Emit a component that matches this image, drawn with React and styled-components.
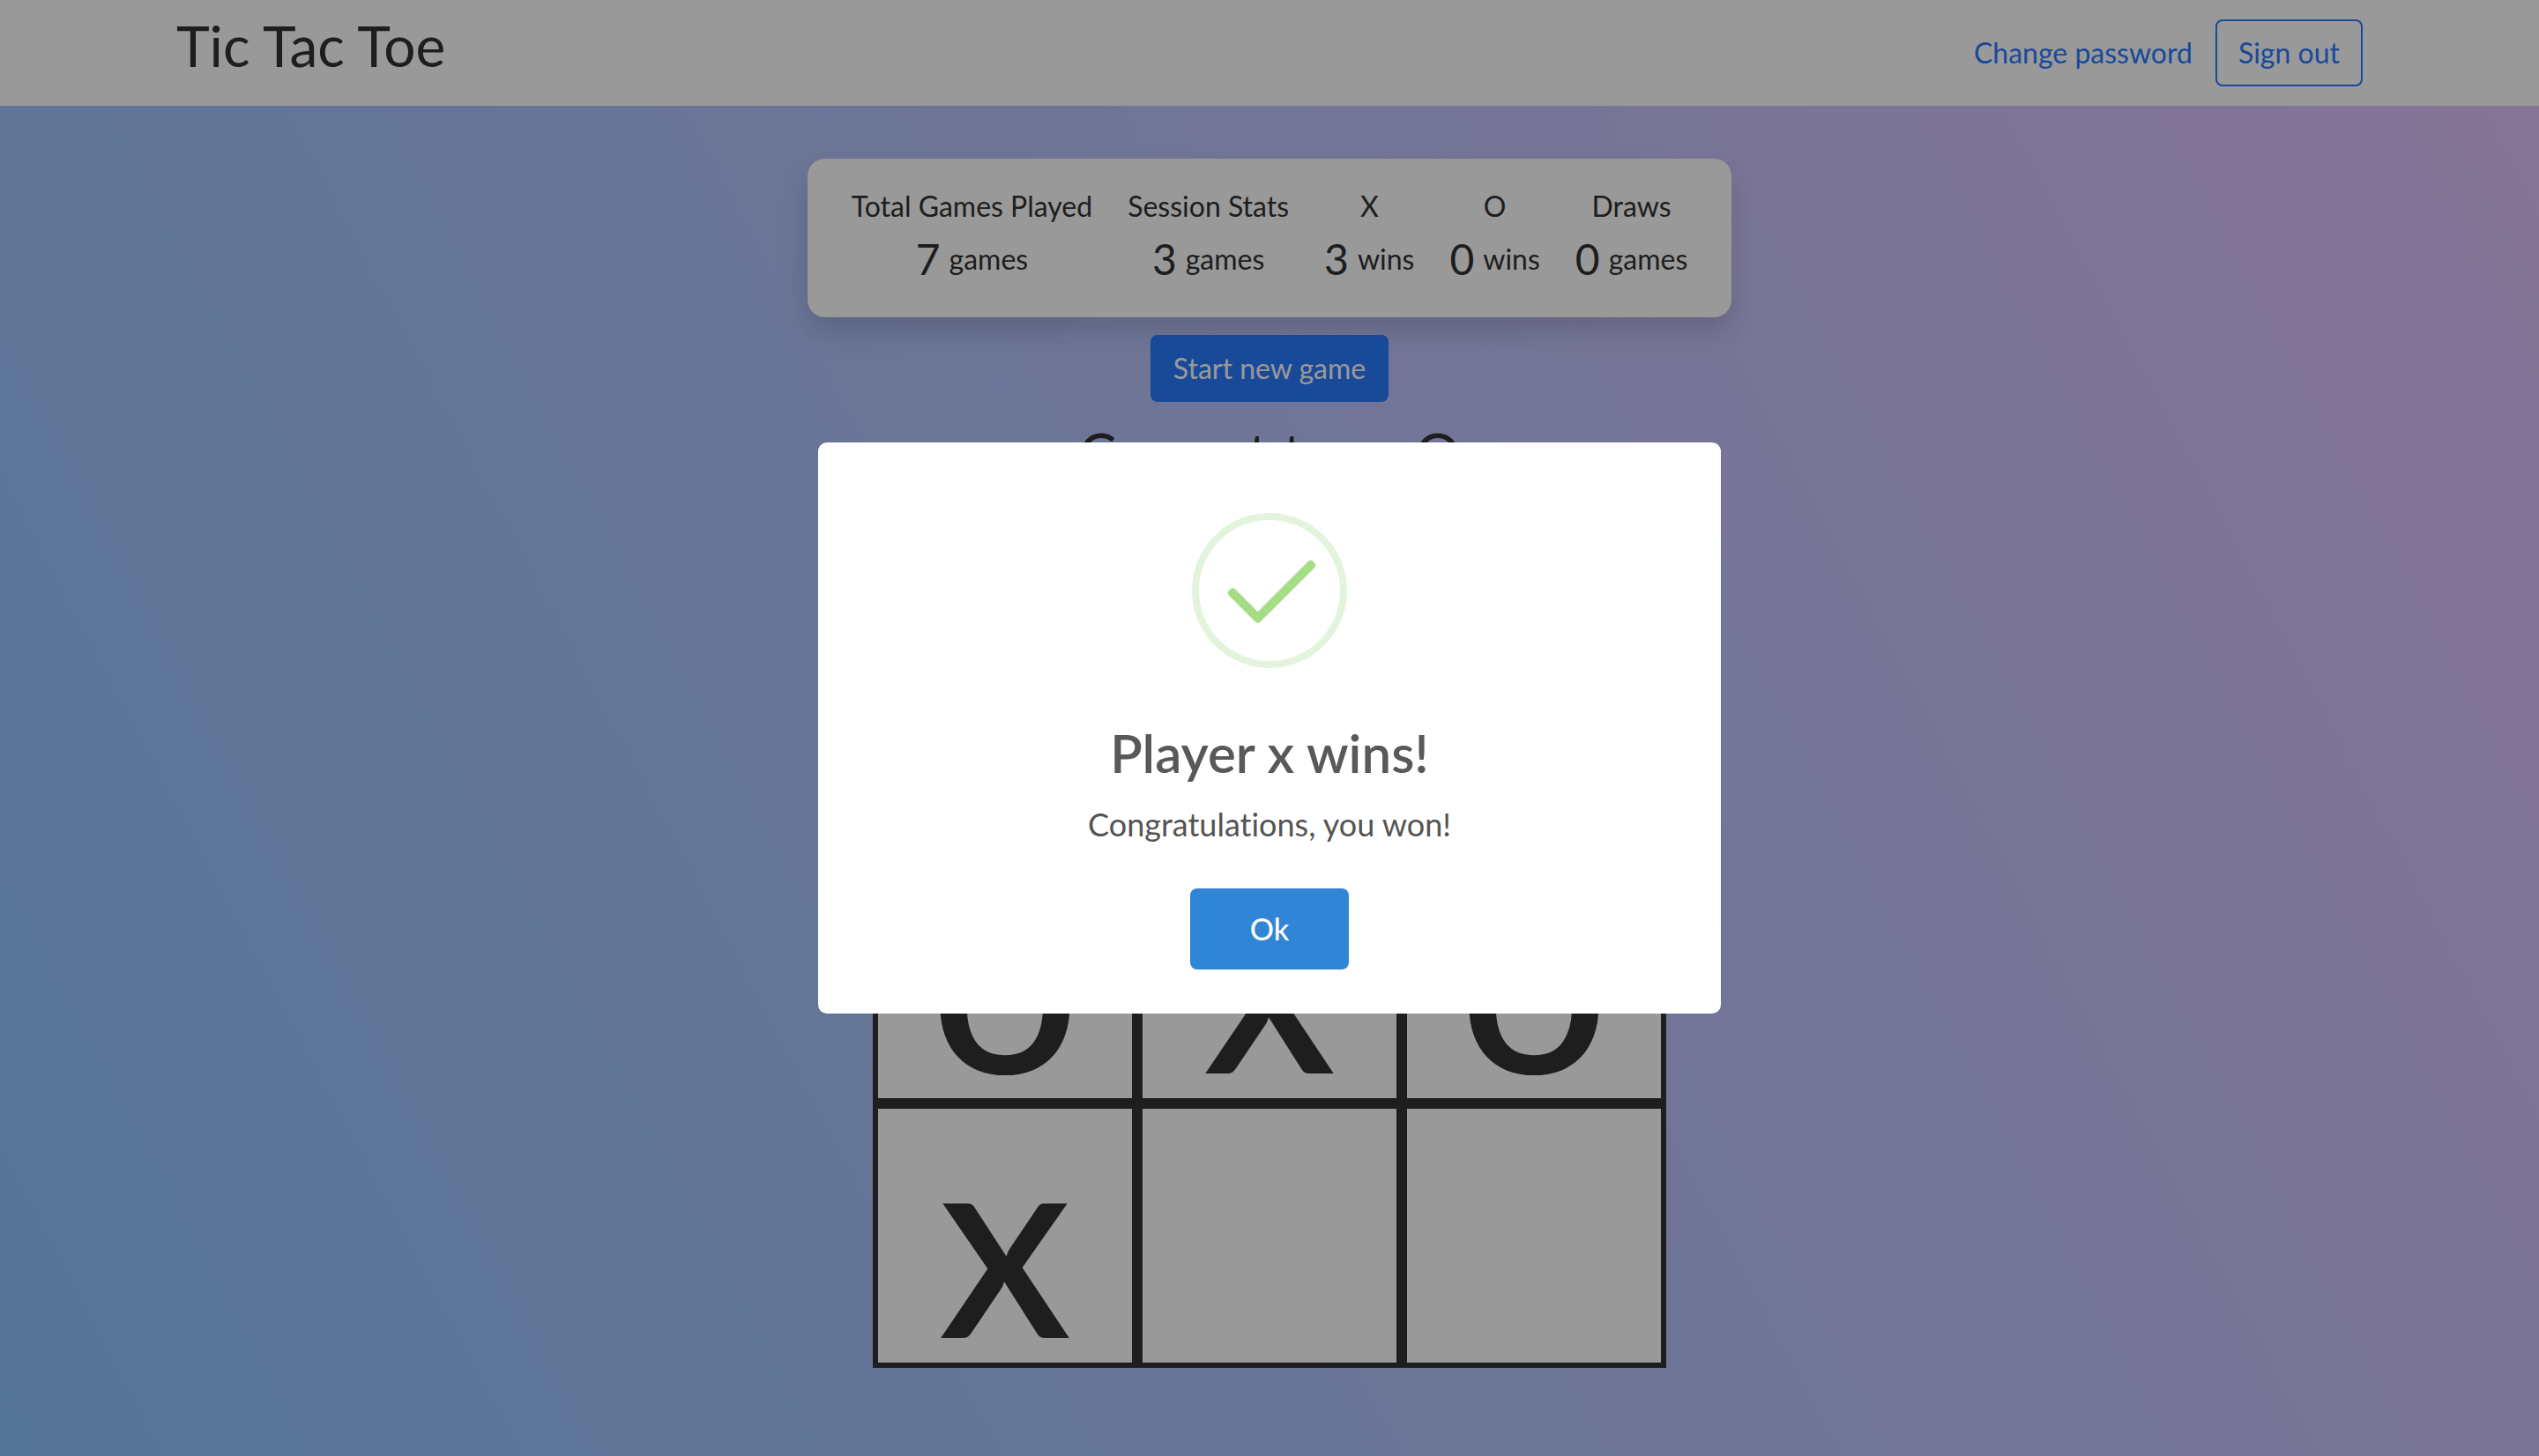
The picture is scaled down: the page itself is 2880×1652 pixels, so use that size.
import React from "react";
import styled, { createGlobalStyle } from "styled-components";

const GlobalStyle = createGlobalStyle`
  *, *::before, *::after { box-sizing: border-box; }
  body {
    margin: 0;
    color: #333333;
    font-family: Lato, "Noto Sans", sans-serif;
    font-size: 32px;
    font-variant-ligatures: none;
    line-height: 48px;
  }
  button { font: inherit; cursor: pointer; }
  h1, h2, p, dl, dt, dd { margin: 0; }
`;

const Page = styled.div`
  display: flex;
  flex-direction: column;
  min-height: 100vh;
  background: linear-gradient(62deg, #8ec5fc 0%, #e0c3fc 100%);
`;

const Navbar = styled.header`
  background: #ffffff;
`;

const NavContainer = styled.div`
  display: flex;
  align-items: center;
  justify-content: space-between;
  width: 100%;
  max-width: 2480px;
  min-height: 120px;
  margin: 0 auto;
`;

const Heading = styled.h1`
  margin-bottom: 16px;
  font-size: 64px;
  font-weight: 400;
  line-height: 76px;
`;

const Nav = styled.nav`
  display: flex;
  align-items: center;
`;

const NavLink = styled.a`
  padding: 12px 26px;
  color: #2a7bff;
  text-decoration: none;
`;

const Button = styled.button`
  padding: 12px 24px;
  border: 2px solid #2a7bff;
  border-radius: 8px;
  background: ${(p) => (p.$outline ? "transparent" : "#2a7bff")};
  color: ${(p) => (p.$outline ? "#2a7bff" : "#ffffff")};
`;

const Main = styled.main`
  display: flex;
  flex-direction: column;
  align-items: center;
  gap: 20px;
  padding: 60px 0 100px;
`;

const StatsCard = styled.dl`
  display: flex;
  gap: 40px;
  padding: 30px 50px;
  border-radius: 20px;
  background: #ffffff;
  box-shadow: 0 16px 32px rgba(0, 0, 0, 0.15);
`;

const Stat = styled.div`
  display: flex;
  flex-direction: column;
  align-items: center;
`;

const StatValue = styled.dd`
  display: flex;
  align-items: center;
  gap: 10px;
`;

const StatNumber = styled.span`
  font-size: 48px;
  line-height: 72px;
`;

const Game = styled.section`
  display: flex;
  flex-direction: column;
  align-items: center;
  gap: 100px;
`;

const TurnHeading = styled.h2`
  font-size: 64px;
  font-weight: 400;
  line-height: 76px;
`;

const Board = styled.div`
  display: grid;
  grid-template-columns: repeat(3, 300px);
  grid-auto-rows: 300px;
`;

const Cell = styled.button`
  display: flex;
  align-items: center;
  justify-content: center;
  padding: 0;
  border: 6px solid #333333;
  background: #ffffff;
  color: #333333;
  && {
    font-size: 300px;
    font-weight: 500;
    line-height: 288px;
  }
`;

const Overlay = styled.div`
  position: fixed;
  inset: 0;
  display: flex;
  align-items: center;
  justify-content: center;
  background: rgba(0, 0, 0, 0.4);
`;

const Modal = styled.section`
  display: flex;
  flex-direction: column;
  align-items: center;
  width: 1024px;
  max-width: 100%;
  padding: 80px 32px 50px;
  border-radius: 10px;
  background: #ffffff;
  color: #545454;
`;

const SuccessIcon = styled.svg`
  width: 176px;
  height: 176px;
`;

const ModalTitle = styled.h2`
  margin-top: 60px;
  color: #595959;
  font-size: 60px;
  font-weight: 600;
  line-height: 72px;
`;

const ModalText = styled.p`
  margin-top: 18px;
  font-size: 36px;
  line-height: 54px;
`;

const ConfirmButton = styled.button`
  min-width: 180px;
  margin-top: 46px;
  padding: 20px 40px;
  border: 0;
  border-radius: 8px;
  background: #3085d6;
  color: #ffffff;
  && {
    font-size: 34px;
    font-weight: 500;
    line-height: 52px;
  }
`;

const stats = [
  { label: "Total Games Played", value: 7, unit: "games" },
  { label: "Session Stats", value: 3, unit: "games" },
  { label: "X", value: 3, unit: "wins" },
  { label: "O", value: 0, unit: "wins" },
  { label: "Draws", value: 0, unit: "games" },
];

const cells = ["", "", "x", "o", "x", "o", "x", "", ""];

export default function App() {
  return (
    <>
      <GlobalStyle />
      <Page>
        <Navbar>
          <NavContainer>
            <Heading>Tic Tac Toe</Heading>
            <Nav>
              <NavLink href="#change-password">Change password</NavLink>
              <Button type="button" $outline>Sign out</Button>
            </Nav>
          </NavContainer>
        </Navbar>
        <Main>
          <StatsCard>
            {stats.map((s) => (
              <Stat key={s.label}>
                <dt>{s.label}</dt>
                <StatValue>
                  <StatNumber>{s.value}</StatNumber>
                  <span>{s.unit}</span>
                </StatValue>
              </Stat>
            ))}
          </StatsCard>
          <Button type="button">Start new game</Button>
          <Game>
            <TurnHeading>Current turn: O</TurnHeading>
            <Board>
              {cells.map((mark, i) => (
                <Cell key={i} type="button" aria-label={`Square ${i + 1} ${mark}`}>
                  {mark}
                </Cell>
              ))}
            </Board>
          </Game>
        </Main>
      </Page>
      <Overlay>
        <Modal role="dialog" aria-modal="true" aria-labelledby="result-title">
          <SuccessIcon viewBox="0 0 176 176" fill="none" aria-hidden="true">
            <circle cx="88" cy="88" r="84" stroke="#e3f4dc" strokeWidth="8" />
            <g fill="#a5dc86">
              <rect x="35.5" y="100" width="50" height="10" rx="4" transform="rotate(45 60.5 105)" />
              <rect x="58" y="84" width="94" height="10" rx="4" transform="rotate(-45 105 89)" />
            </g>
          </SuccessIcon>
          <ModalTitle id="result-title">Player x wins!</ModalTitle>
          <ModalText>Congratulations, you won!</ModalText>
          <ConfirmButton type="button">Ok</ConfirmButton>
        </Modal>
      </Overlay>
    </>
  );
}
